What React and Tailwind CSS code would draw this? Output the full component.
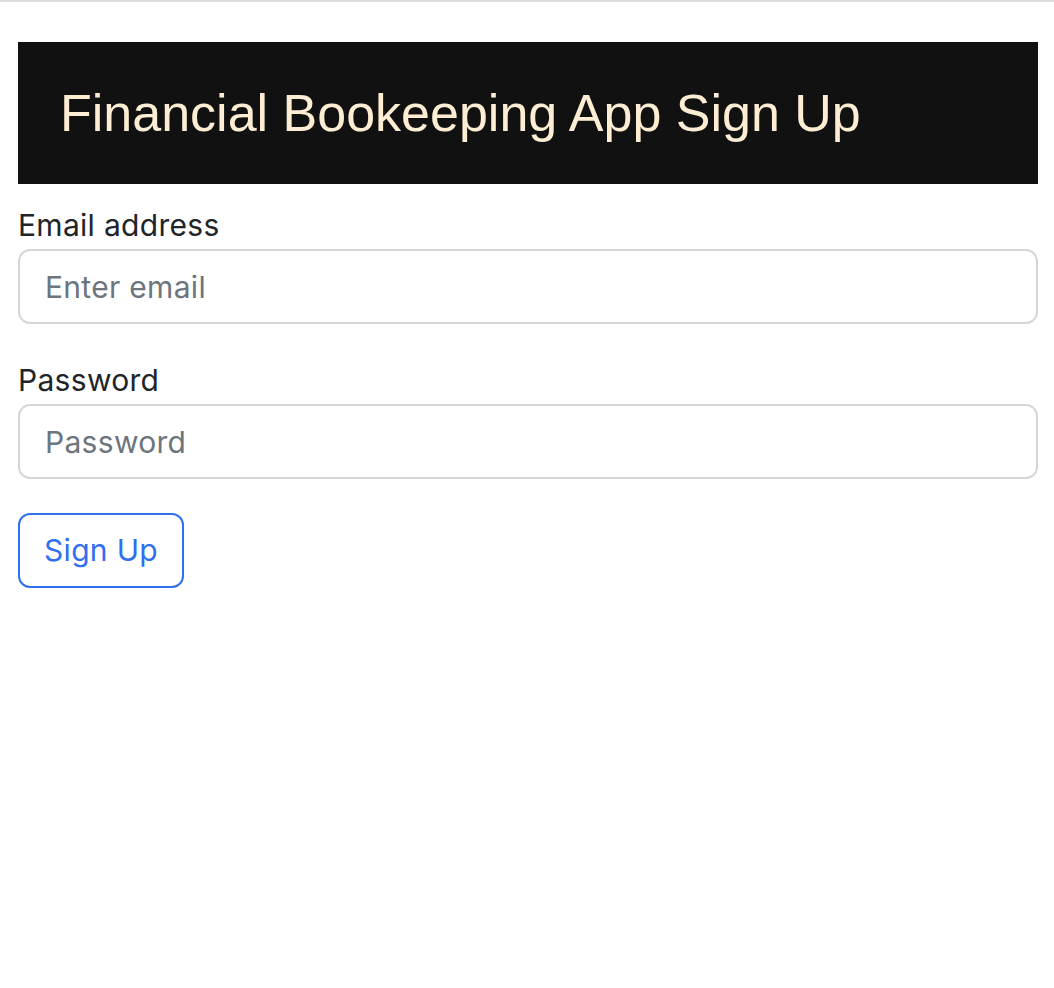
export default function App() {
  const sf = { fontFamily: 'Inter, "Noto Sans", sans-serif' };
  return (
    <div className="min-h-[988px] bg-white">
      <div className="h-[2px] bg-[#dcdcdc]" />
      <div className="pl-[18px] pr-[16px] pt-[40px]">
        <div className="bg-[#111111] h-[142px] flex items-center pl-[42px]">
          <h1
            className="text-[52px] leading-none text-[#fdedd3] font-normal"
            style={{ fontFamily: '"Liberation Sans", Arial, sans-serif' }}
          >
            Financial Bookeeping App Sign Up
          </h1>
        </div>
        <form style={sf}>
          <label className="block text-[30px] tracking-[0.3px] leading-[42px] text-[#212529] mt-[20px] mb-[3px]">
            Email address
          </label>
          <input
            type="email"
            placeholder="Enter email"
            className="block w-full h-[75px] border-2 border-[#d3d6da] rounded-[12px] px-[25px] text-[30px] tracking-[0.3px] placeholder:text-[#6c757d] outline-none"
          />
          <label className="block text-[30px] tracking-[0.3px] leading-[42px] text-[#212529] mt-[35px] mb-[3px]">
            Password
          </label>
          <input
            type="password"
            placeholder="Password"
            className="block w-full h-[75px] border-2 border-[#d3d6da] rounded-[12px] px-[25px] text-[30px] tracking-[0.3px] placeholder:text-[#6c757d] outline-none"
          />
          <button
            type="button"
            className="mt-[34px] w-[166px] h-[75px] border-2 border-[#2f6ff0] rounded-[12px] text-[30px] tracking-[0.3px] text-[#2f6ff0] bg-white"
          >
            Sign Up
          </button>
        </form>
      </div>
    </div>
  );
}
